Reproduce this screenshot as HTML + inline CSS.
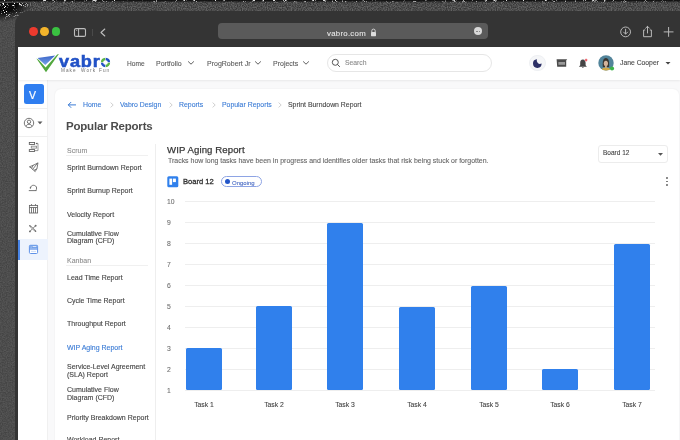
<!DOCTYPE html>
<html><head><meta charset="utf-8">
<style>
*{margin:0;padding:0;box-sizing:border-box}
html,body{width:680px;height:440px;overflow:hidden}
body{position:relative;background:#4a4a4a;font-family:"Liberation Sans",sans-serif}
.a{position:absolute}
.t{position:absolute;white-space:nowrap;line-height:1;will-change:transform;-webkit-text-stroke:.1px currentColor}
#noise{left:0;top:0;width:680px;height:440px;background:linear-gradient(135deg,#222 0px,#3a3a3a 30px,#4d4d4d 60px,#4a4a4a 100%)}
#frame{left:14.5px;top:10.5px;width:700px;height:460px;background:#343434;border-top-left-radius:14px}
#addr{left:218px;top:23px;width:270px;height:16px;background:#5a5a5a;border-radius:4px}
#page{left:18px;top:47px;width:680px;height:400px;background:#fff}
#hdr{left:18px;top:47px;width:662px;height:33px;background:#fff;box-shadow:0 .5px 2px rgba(0,0,0,.07)}
#side{left:18px;top:80px;width:30px;height:360px;background:#fff;border-right:1px solid #f0f0f0}
#cbg{left:48px;top:80px;width:632px;height:360px;background:#f9f9fa}
#card{left:54.5px;top:88.5px;width:624px;height:360px;background:#fff;box-shadow:0 0 2px rgba(0,0,0,.07);border-radius:6px}
.nav{font-size:7px;color:#5a5a5a}
.bc{font-size:6.9px;color:#3a7bd5}
.rep{font-size:7px;color:#444;-webkit-text-stroke:.12px currentColor}
.sec{font-size:7px;color:#8a8a8a;-webkit-text-stroke:.08px currentColor}
.yl{font-size:6.8px;color:#707070}
.grid{left:184.5px;width:470.5px;height:1px;background:#eeeeee}
.bar{background:#3080ec;border-radius:1.5px;width:36px}
.tl{font-size:6.8px;color:#444;text-align:center;width:40px}
</style></head><body>
<svg class="a" style="left:0;top:0" width="680" height="440" viewBox="0 0 680 440">
<defs><filter id="nz" x="0" y="0" width="100%" height="100%"><feTurbulence type="fractalNoise" baseFrequency="0.8" numOctaves="2" seed="3"/><feColorMatrix type="matrix" values="0 0 0 0 0  0 0 0 0 0  0 0 0 0 0  0 0 0 -2.2 1.6"/></filter>
<radialGradient id="cg" cx="0" cy="0" r="1" gradientUnits="userSpaceOnUse" gradientTransform="scale(40)"><stop offset="0" stop-color="#000" stop-opacity=".8"/><stop offset="1" stop-color="#000" stop-opacity="0"/></radialGradient></defs>
<rect width="680" height="440" fill="#565656"/>
<rect width="680" height="440" filter="url(#nz)" opacity=".2"/>
<rect width="680" height="11" fill="#636363"/>
<rect width="680" height="12" filter="url(#nz)" opacity=".45"/>
<filter id="sp" x="0" y="0" width="100%" height="100%"><feTurbulence type="turbulence" baseFrequency="1.1" numOctaves="1" seed="7"/><feColorMatrix type="matrix" values="0 0 0 0 1  0 0 0 0 1  0 0 0 0 1  0 0 0 7 -1.9"/></filter>
<radialGradient id="cg2" cx="0" cy="0" r="1" gradientUnits="userSpaceOnUse" gradientTransform="scale(34 22)"><stop offset="0" stop-color="#fff"/><stop offset=".55" stop-color="#fff"/><stop offset="1" stop-color="#000"/></radialGradient>
<linearGradient id="tg" x1="0" y1="0" x2="0" y2="1"><stop offset="0" stop-color="#fff"/><stop offset="1" stop-color="#000"/></linearGradient>
<mask id="cm"><rect width="80" height="50" fill="url(#cg2)"/><rect width="680" height="3" fill="url(#tg)"/></mask>
<g mask="url(#cm)"><rect width="680" height="50" fill="#0a0a0a"/><rect width="680" height="50" filter="url(#sp)"/></g>
</svg>
<div class="a" id="frame"></div>
<!-- traffic lights -->
<div class="a" style="left:29.1px;top:27.4px;width:8.8px;height:8.8px;border-radius:50%;background:#ec3a2e"></div>
<div class="a" style="left:40.3px;top:27.4px;width:8.8px;height:8.8px;border-radius:50%;background:#f3b42b"></div>
<div class="a" style="left:51.5px;top:27.4px;width:8.8px;height:8.8px;border-radius:50%;background:#3ac241"></div>
<!-- sidebar toggle icon -->
<svg class="a" style="left:72px;top:26px" width="16" height="12" viewBox="0 0 16 12"><rect x="2.5" y="2.6" width="11" height="7.8" rx="1.5" fill="none" stroke="#bdbdbd" stroke-width="1.1"/><line x1="6.6" y1="2.6" x2="6.6" y2="10.4" stroke="#bdbdbd" stroke-width="1"/><line x1="4" y1="4.4" x2="5.2" y2="4.4" stroke="#bdbdbd" stroke-width=".7"/></svg>
<div class="a" style="left:92px;top:29px;width:1px;height:7px;background:#4a4a4a"></div>
<svg class="a" style="left:98px;top:26px" width="10" height="12" viewBox="0 0 10 12"><path d="M6.8 3 L3 6.5 L6.8 10" fill="none" stroke="#bdbdbd" stroke-width="1.1" stroke-linecap="round" stroke-linejoin="round"/></svg>
<div class="a" id="addr"></div>
<div class="t" style="left:327px;top:30.1px;font-size:7.8px;color:#e6e6e6;letter-spacing:.28px">vabro.com</div>
<svg class="a" style="left:370px;top:28px" width="7" height="9" viewBox="0 0 7 9"><path d="M1.8 4 V2.8 a1.7 1.7 0 0 1 3.4 0 V4" fill="none" stroke="#ddd" stroke-width=".9"/><rect x="1" y="4" width="5" height="4.2" rx=".6" fill="#ddd"/></svg>
<div class="a" style="left:474px;top:27px;width:8.2px;height:8.2px;border-radius:50%;background:#d8d8d8"></div>
<div class="a" style="left:475.8px;top:30.6px;width:4.6px;height:1px;border-top:1px dotted #888"></div>
<!-- right toolbar icons -->
<svg class="a" style="left:618px;top:24px" width="16" height="16" viewBox="0 0 16 16"><circle cx="7.6" cy="7.9" r="4.9" fill="none" stroke="#b8b8b8" stroke-width="1"/><path d="M7.6 5.2 V10 M5.6 8.1 L7.6 10.1 L9.6 8.1" fill="none" stroke="#b8b8b8" stroke-width="1" stroke-linecap="round" stroke-linejoin="round"/></svg>
<svg class="a" style="left:640px;top:24px" width="14" height="15" viewBox="0 0 14 15"><path d="M5.2 6 H3.6 V12.7 H11.4 V6 H9.8" fill="none" stroke="#b8b8b8" stroke-width="1" stroke-linejoin="round"/><path d="M7.5 9 V2.4 M5.6 4.2 L7.5 2.3 L9.4 4.2" fill="none" stroke="#b8b8b8" stroke-width="1" stroke-linecap="round" stroke-linejoin="round"/></svg>
<svg class="a" style="left:662px;top:25px" width="14" height="14" viewBox="0 0 14 14"><path d="M6.6 2.4 V11.4 M2.1 6.9 H11.1" fill="none" stroke="#b8b8b8" stroke-width="1" stroke-linecap="round"/></svg>

<div class="a" id="page"></div>
<div class="a" id="cbg"></div>
<div class="a" id="side"></div>
<div class="a" id="card"></div>
<div class="a" id="hdr"></div>

<!-- logo -->
<svg class="a" style="left:0;top:0" width="120" height="80" viewBox="0 0 120 80">
<defs><linearGradient id="bg1" x1="0" y1="0" x2="0" y2="1"><stop offset="0" stop-color="#3a64c8"/><stop offset="1" stop-color="#79a3ea"/></linearGradient></defs>
<path d="M36.4 58.4 L46 72.2 L58.9 54 L57.2 54.5 L45.6 67.6 L38.6 59.8 Z" fill="#52a83e"/>
<path d="M37.6 58 L55.2 55.6 L45.3 65 Z" fill="url(#bg1)"/>
<g fill="none" stroke-width="2.3">
<path d="M102.01 62.26 A3.5 3.5 0 0 1 105.26 59.01" stroke="#5cb545"/>
<path d="M105.74 59.01 A3.5 3.5 0 0 1 108.99 62.26" stroke="#2151c6"/>
<path d="M108.99 62.74 A3.5 3.5 0 0 1 105.74 65.99" stroke="#5cb545"/>
<path d="M105.26 65.99 A3.5 3.5 0 0 1 102.01 62.74" stroke="#2151c6"/>
</g>
</svg>
<div class="t" style="left:59.2px;top:53px;font-size:16.3px;font-weight:bold;color:#2151c6;letter-spacing:.75px;transform:scaleX(1.11);transform-origin:0 0;-webkit-text-stroke:.55px #2151c6">vabr</div>
<div class="t" style="left:60.6px;top:68.5px;font-size:4.7px;color:#707070;letter-spacing:1.05px;-webkit-text-stroke:0">Make</div>
<div class="t" style="left:80.6px;top:68.5px;font-size:4.7px;color:#707070;letter-spacing:1.05px;-webkit-text-stroke:0">Work</div>
<div class="t" style="left:98.8px;top:68.5px;font-size:4.7px;color:#707070;letter-spacing:1.05px;-webkit-text-stroke:0">Fun</div>

<!-- nav -->
<div class="t nav" style="left:127px;top:60.8px;font-size:6.6px">Home</div>
<div class="t nav" style="left:156px;top:59.6px">Portfolio</div>
<svg class="a" style="left:187px;top:60px" width="8" height="6" viewBox="0 0 8 6"><path d="M1.4 1.7 L4 4.2 L6.6 1.7" fill="none" stroke="#555" stroke-width=".95" stroke-linecap="round" stroke-linejoin="round"/></svg>
<div class="t nav" style="left:206.5px;top:59.6px">ProgRobert Jr</div>
<svg class="a" style="left:253.5px;top:60px" width="8" height="6" viewBox="0 0 8 6"><path d="M1.4 1.7 L4 4.2 L6.6 1.7" fill="none" stroke="#555" stroke-width=".95" stroke-linecap="round" stroke-linejoin="round"/></svg>
<div class="t nav" style="left:273px;top:59.6px">Projects</div>
<svg class="a" style="left:302px;top:60px" width="8" height="6" viewBox="0 0 8 6"><path d="M1.4 1.7 L4 4.2 L6.6 1.7" fill="none" stroke="#555" stroke-width=".95" stroke-linecap="round" stroke-linejoin="round"/></svg>

<!-- search -->
<div class="a" style="left:327px;top:54px;width:165px;height:18px;border:1px solid #e6e6e6;border-radius:9px;background:#fff"></div>
<svg class="a" style="left:331px;top:58px" width="10" height="10" viewBox="0 0 10 10"><circle cx="4.3" cy="4.3" r="3" fill="none" stroke="#555" stroke-width="1"/><path d="M6.5 6.5 L8.6 8.6" stroke="#555" stroke-width="1" stroke-linecap="round"/></svg>
<div class="t" style="left:345px;top:59.5px;font-size:6.8px;color:#8a8a8a">Search</div>

<!-- header right -->
<div class="a" style="left:529px;top:54.6px;width:16.6px;height:16.6px;border-radius:50%;background:#f5f6f8;border:1px solid #eef0f3"></div>
<svg class="a" style="left:532px;top:58px" width="11" height="11" viewBox="0 0 11 11"><path d="M4.96 1.31 A4.3 4.3 0 1 0 9.6 5.49 A3.3 3.3 0 0 1 4.96 1.31 Z" fill="#2c3066"/></svg>
<svg class="a" style="left:556px;top:58px" width="12" height="10" viewBox="0 0 12 10"><path d="M0.6 1.2 H11.2 L10.2 2.6 V8.8 H1.2 Z" fill="#4b4b4b"/><rect x="2.4" y="4" width="6.6" height="2.8" fill="#9a9a9a"/></svg>
<svg class="a" style="left:577px;top:58px" width="12" height="11" viewBox="0 0 12 11"><path d="M5.9 1.6 C3.9 1.6 3.2 3.2 3.2 5 V7.3 L1.9 8.8 H9.9 L8.6 7.3 V5 C8.6 3.2 7.9 1.6 5.9 1.6Z" fill="#454545"/><path d="M4.9 9 H6.9 L5.9 9.9Z" fill="#454545"/><circle cx="9.1" cy="2.1" r="1.3" fill="#e8474a" stroke="#fde" stroke-width=".4"/></svg>
<!-- avatar -->
<svg class="a" style="left:598px;top:55px" width="17" height="17" viewBox="0 0 17 17">
<defs><clipPath id="av"><circle cx="8" cy="7.9" r="7.7"/></clipPath></defs>
<g clip-path="url(#av)"><rect width="17" height="17" fill="#52849a"/><path d="M4.8 12 C4.4 6.5 5 3 7.9 3 C10.8 3 11.4 6.5 11 12Z" fill="#3a3530"/><path d="M3 17 C3 13.6 5 12.6 8 12.6 C11 12.6 13 13.6 13 17Z" fill="#cfa847"/><ellipse cx="7.9" cy="8.3" rx="2.1" ry="2.9" fill="#d4b49c"/><rect x="7" y="10.5" width="1.8" height="2.4" fill="#c9a890"/><path d="M5.7 7.4 C5.8 5.2 6.7 4.3 7.9 4.3 C9.1 4.3 10 5.2 10.1 7.4 C9.5 6.2 8.8 5.6 7.9 5.6 C7 5.6 6.3 6.2 5.7 7.4Z" fill="#3a3530"/></g>
<circle cx="14" cy="13.5" r="2.1" fill="#3cb34a"/>
</svg>
<div class="t" style="left:619.5px;top:59.9px;font-size:6.8px;color:#484848">Jane Cooper</div>
<svg class="a" style="left:664px;top:60.2px" width="8" height="6" viewBox="0 0 8 6"><path d="M1.5 2 H6.5 L4 4.6Z" fill="#444"/></svg>

<!-- sidebar -->
<div class="a" style="left:23.5px;top:84px;width:20px;height:20px;border-radius:2.5px;background:#2f7ef0"></div>
<div class="t" style="left:29px;top:89.6px;font-size:10.5px;color:#fff;-webkit-text-stroke:.2px #fff">V</div>
<div class="a" style="left:18px;top:108px;width:30px;height:1px;background:#efefef"></div>
<svg class="a" style="left:23px;top:116.6px" width="12" height="12" viewBox="0 0 12 12"><circle cx="6" cy="6" r="4.7" fill="none" stroke="#666" stroke-width=".9"/><circle cx="6" cy="4.8" r="1.7" fill="none" stroke="#666" stroke-width=".9"/><path d="M3 9.4 C3.6 7.8 4.6 7.3 6 7.3 C7.4 7.3 8.4 7.8 9 9.4" fill="none" stroke="#666" stroke-width=".9"/></svg>
<svg class="a" style="left:36.8px;top:120.6px" width="6" height="4" viewBox="0 0 6 4"><path d="M.5 .6 H5.5 L3 3.3Z" fill="#5a5a5a"/></svg>
<div class="a" style="left:18px;top:136px;width:30px;height:1px;background:#efefef"></div>
<!-- icon 1 -->
<svg class="a" style="left:26px;top:139px" width="16" height="16" viewBox="0 0 16 16"><g fill="none" stroke="#5a5a5a" stroke-width=".85"><rect x="3.3" y="3.5" width="5.3" height="1.9"/><rect x="5.3" y="7.2" width="5.3" height="1.9" stroke="#8a8a8a"/><rect x="3.3" y="10.6" width="5.3" height="1.9"/><path d="M10.8 4.5 H12 V11.6 H9" stroke="#8a8a8a"/></g><path d="M9.6 4.5 L11.2 3.5 V5.5Z" fill="#5a5a5a"/></svg>
<!-- icon 2 rocket -->
<svg class="a" style="left:26px;top:160px" width="16" height="16" viewBox="0 0 16 16"><g fill="none" stroke="#666" stroke-width=".85" stroke-linejoin="round" stroke-linecap="round"><path d="M11.6 3.1 L7 5.4 L5.6 8.2 L7.8 10.4 L10.6 9 Z"/><path d="M7 5.4 L3.4 6.8 L5.6 8.2 M10.6 9 L9.2 11.6 L7.8 10.4 M11.6 3.1 L6.7 9.3"/></g></svg>
<!-- icon 3 -->
<svg class="a" style="left:26px;top:181px" width="16" height="16" viewBox="0 0 16 16"><g fill="none" stroke="#666" stroke-width=".9" stroke-linecap="round"><path d="M3.2 9.6 H10.1"/><path d="M4.4 6.9 C4.8 5 6 4.3 7.4 4.3 C9.2 4.3 10.6 5.4 10.6 7 C10.6 8.2 10.3 9 9.9 9.5"/></g><path d="M3.6 6.2 L5.4 6.6 L4.3 7.9 Z" fill="#666"/></svg>
<!-- icon 4 calendar -->
<svg class="a" style="left:26px;top:201px" width="16" height="16" viewBox="0 0 16 16"><g fill="none" stroke="#666" stroke-width=".85"><rect x="3.4" y="4.4" width="8.2" height="7.6"/><path d="M3.4 6.5 H11.6 M5.5 6.5 V12 M7.5 6.5 V12 M9.5 6.5 V12 M5.5 3.1 V4.6 M9.5 3.1 V4.6"/></g></svg>
<!-- icon 5 tools -->
<svg class="a" style="left:26px;top:221px" width="16" height="16" viewBox="0 0 16 16"><g stroke="#6f6f6f" stroke-linecap="round" fill="none"><path d="M3.8 4.7 L9.6 10.3" stroke-width="1.5"/><path d="M9.7 4.6 L3.8 10.5" stroke-width=".9"/></g><path d="M4.7 5.6 L8.7 9.4" stroke="#fff" stroke-width=".55"/><circle cx="9.6" cy="4.7" r=".95" fill="#6f6f6f"/><circle cx="3.9" cy="10.4" r=".95" fill="#6f6f6f"/></svg>
<!-- active -->
<div class="a" style="left:18px;top:239px;width:30px;height:20.6px;background:#edf3fd"></div>
<div class="a" style="left:18.2px;top:239.5px;width:1.5px;height:20px;background:#4a86e8"></div>
<svg class="a" style="left:26px;top:241px" width="16" height="16" viewBox="0 0 16 16"><rect x="3.4" y="4.3" width="8.2" height="8.2" rx="1.1" fill="#fff" stroke="#5f92e8" stroke-width="1"/><rect x="3.4" y="4.3" width="8.2" height="3.4" fill="#6d9de9"/><path d="M4.6 6 H5.6 M6.6 5.6 H10.4" stroke="#fff" stroke-width=".8"/><path d="M3.4 8.3 H11.6" stroke="#5f92e8" stroke-width=".8"/><path d="M5 10.4 H10" stroke="#a9c4f2" stroke-width=".6"/></svg>
<!-- breadcrumbs -->
<svg class="a" style="left:67px;top:100.6px" width="9" height="8" viewBox="0 0 9 8"><path d="M8.6 3.9 H1.4 M3.9 1.3 L1.3 3.9 L3.9 6.5" fill="none" stroke="#3a7bd5" stroke-width="1" stroke-linecap="round" stroke-linejoin="round"/></svg>
<div class="t bc" style="left:83px;top:102.1px">Home</div>
<svg class="a" style="left:108.7px;top:101.6px" width="6" height="6" viewBox="0 0 6 6"><path d="M1.6 .6 L4.2 3 L1.6 5.4" fill="none" stroke="#c4c4c4" stroke-width=".8"/></svg>
<div class="t bc" style="left:120px;top:102.1px">Vabro Design</div>
<svg class="a" style="left:168.2px;top:101.6px" width="6" height="6" viewBox="0 0 6 6"><path d="M1.6 .6 L4.2 3 L1.6 5.4" fill="none" stroke="#c4c4c4" stroke-width=".8"/></svg>
<div class="t bc" style="left:178.5px;top:102.1px">Reports</div>
<svg class="a" style="left:211.2px;top:101.6px" width="6" height="6" viewBox="0 0 6 6"><path d="M1.6 .6 L4.2 3 L1.6 5.4" fill="none" stroke="#c4c4c4" stroke-width=".8"/></svg>
<div class="t bc" style="left:221.5px;top:102.1px">Popular Reports</div>
<svg class="a" style="left:277.2px;top:101.6px" width="6" height="6" viewBox="0 0 6 6"><path d="M1.6 .6 L4.2 3 L1.6 5.4" fill="none" stroke="#c4c4c4" stroke-width=".8"/></svg>
<div class="t" style="left:288px;top:102.1px;font-size:6.9px;color:#444">Sprint Burndown Report</div>

<div class="t" style="left:66.1px;top:121px;font-size:11.5px;font-weight:bold;color:#4c4c4c;letter-spacing:-.2px;-webkit-text-stroke:0">Popular Reports</div>

<!-- report list -->
<div class="t sec" style="left:66.5px;top:146.5px">Scrum</div>
<div class="a" style="left:66px;top:155px;width:82px;height:1px;background:#f0f0f0"></div>
<div class="t rep" style="left:66.5px;top:164px">Sprint Burndown Report</div>
<div class="t rep" style="left:66.5px;top:187px">Sprint Burnup Report</div>
<div class="t rep" style="left:66.5px;top:210.5px">Velocity Report</div>
<div class="t rep" style="left:66.5px;top:229.5px">Cumulative Flow</div>
<div class="t rep" style="left:66.5px;top:237px">Diagram (CFD)</div>
<div class="t sec" style="left:66.5px;top:256.5px">Kanban</div>
<div class="a" style="left:66px;top:265px;width:82px;height:1px;background:#f0f0f0"></div>
<div class="t rep" style="left:66.5px;top:273.5px">Lead Time Report</div>
<div class="t rep" style="left:66.5px;top:297px">Cycle Time Report</div>
<div class="t rep" style="left:66.5px;top:320px">Throughput Report</div>
<div class="t rep" style="left:66.5px;top:343.5px;color:#3a7bd5">WIP Aging Report</div>
<div class="t rep" style="left:66.5px;top:363px">Service-Level Agreement</div>
<div class="t rep" style="left:66.5px;top:370.5px">(SLA) Report</div>
<div class="t rep" style="left:66.5px;top:386px">Cumulative Flow</div>
<div class="t rep" style="left:66.5px;top:394px">Diagram (CFD)</div>
<div class="t rep" style="left:66.5px;top:413.5px">Priority Breakdown Report</div>
<div class="t rep" style="left:66.5px;top:436px">Workload Report</div>
<div class="a" style="left:155px;top:144px;width:1px;height:300px;background:#eeeeee"></div>

<!-- chart header -->
<div class="t" style="left:167px;top:145.2px;font-size:9.6px;color:#383838;letter-spacing:.1px;-webkit-text-stroke:.25px #383838">WIP Aging Report</div>
<div class="t" style="left:167.5px;top:157.8px;font-size:6.96px;color:#666">Tracks how long tasks have been in progress and identifies older tasks that risk being stuck or forgotten.</div>
<svg class="a" style="left:166.5px;top:176px" width="12" height="12" viewBox="0 0 12 12"><rect x=".3" y=".3" width="11" height="11" rx="1.5" fill="#3080ec"/><rect x="2.4" y="2.6" width="2.7" height="6.2" fill="#fff"/><rect x="5.9" y="2.6" width="3" height="3.5" fill="#fff"/></svg>
<div class="t" style="left:182.5px;top:178px;font-size:7.6px;color:#333;-webkit-text-stroke:.3px #333">Board 12</div>
<div class="a" style="left:221px;top:176.2px;width:40.8px;height:10.6px;border:1px solid #8ea4e4;border-radius:6px"></div>
<div class="a" style="left:224.9px;top:179.4px;width:5px;height:5px;border-radius:50%;background:#2356c9"></div>
<div class="t" style="left:232px;top:179.5px;font-size:6px;color:#4a6cc4">Ongoing</div>

<!-- dropdown -->
<div class="a" style="left:598px;top:145.2px;width:70px;height:18.3px;border:1px solid #ececec;border-radius:3px"></div>
<div class="t" style="left:603px;top:150px;font-size:6.5px;color:#444">Board 12</div>
<svg class="a" style="left:657px;top:151.6px" width="7" height="5" viewBox="0 0 7 5"><path d="M1 1 H6 L3.5 3.8Z" fill="#555"/></svg>
<div class="a" style="left:666px;top:177px;width:1.8px;height:1.8px;background:#6a6a6a;border-radius:50%"></div>
<div class="a" style="left:666px;top:180.5px;width:1.8px;height:1.8px;background:#6a6a6a;border-radius:50%"></div>
<div class="a" style="left:666px;top:184px;width:1.8px;height:1.8px;background:#6a6a6a;border-radius:50%"></div>

<!-- chart -->
<div class="a grid" style="top:201px"></div>
<div class="a grid" style="top:222px"></div>
<div class="a grid" style="top:243px"></div>
<div class="a grid" style="top:264px"></div>
<div class="a grid" style="top:285px"></div>
<div class="a grid" style="top:306px"></div>
<div class="a grid" style="top:327px"></div>
<div class="a grid" style="top:348px"></div>
<div class="a grid" style="top:369px"></div>
<div class="a grid" style="top:390px"></div>
<div class="t yl" style="left:167px;top:198.8px">10</div>
<div class="t yl" style="left:167px;top:219.8px">9</div>
<div class="t yl" style="left:167px;top:240.8px">8</div>
<div class="t yl" style="left:167px;top:261.8px">7</div>
<div class="t yl" style="left:167px;top:282.8px">6</div>
<div class="t yl" style="left:167px;top:303.8px">5</div>
<div class="t yl" style="left:167px;top:324.8px">4</div>
<div class="t yl" style="left:167px;top:345.8px">3</div>
<div class="t yl" style="left:167px;top:366.8px">2</div>
<div class="t yl" style="left:167px;top:387.8px">1</div>

<div class="a bar" style="left:185.5px;top:348px;height:42px"></div>
<div class="a bar" style="left:255.7px;top:306px;height:84px"></div>
<div class="a bar" style="left:326.8px;top:222.5px;height:167.5px"></div>
<div class="a bar" style="left:399.2px;top:306.5px;height:83.5px"></div>
<div class="a bar" style="left:470.6px;top:285.8px;height:104.2px"></div>
<div class="a bar" style="left:541.8px;top:369px;height:21px"></div>
<div class="a bar" style="left:613.8px;top:243.5px;height:146.5px"></div>

<div class="t tl" style="left:183.5px;top:401.6px">Task 1</div>
<div class="t tl" style="left:253.7px;top:401.6px">Task 2</div>
<div class="t tl" style="left:324.8px;top:401.6px">Task 3</div>
<div class="t tl" style="left:397.2px;top:401.6px">Task 4</div>
<div class="t tl" style="left:468.6px;top:401.6px">Task 5</div>
<div class="t tl" style="left:539.8px;top:401.6px">Task 6</div>
<div class="t tl" style="left:611.8px;top:401.6px">Task 7</div>
</body></html>
